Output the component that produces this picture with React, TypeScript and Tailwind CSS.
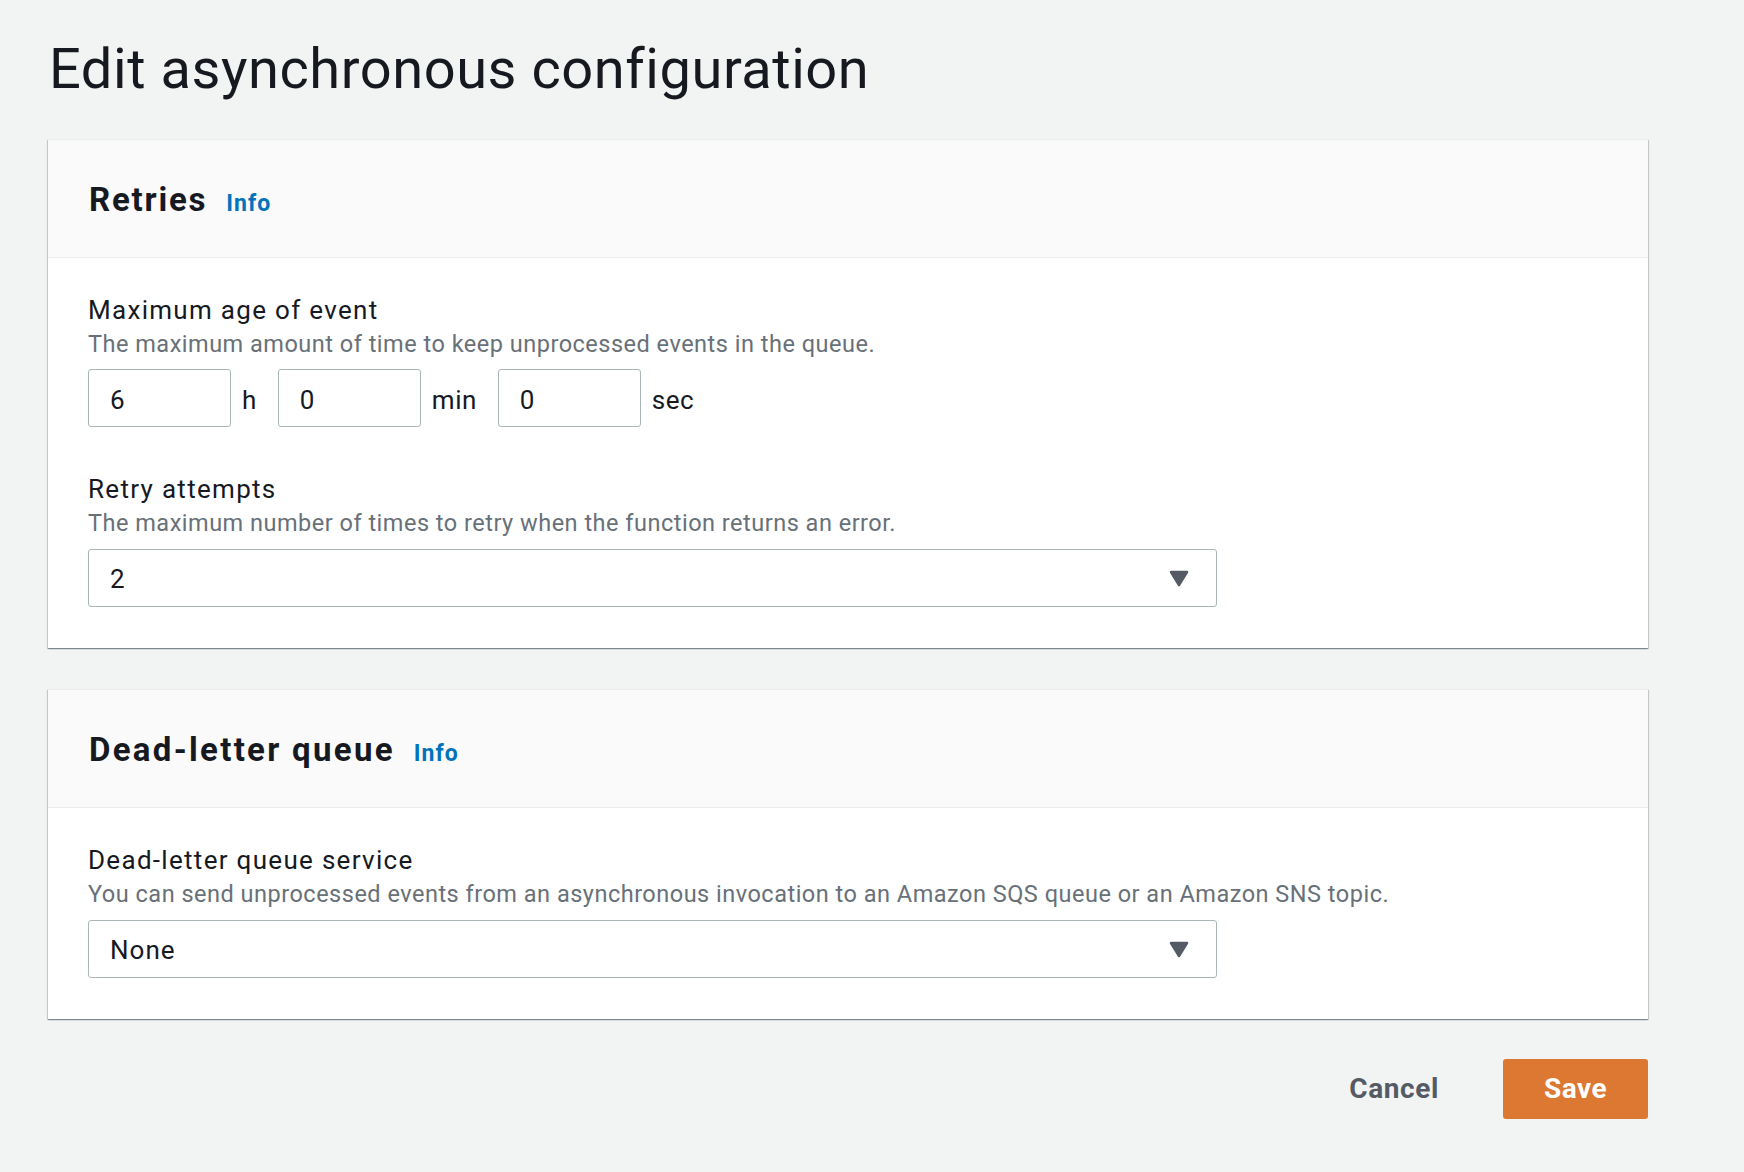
function Caret() {
  return (
    <svg width="20" height="17" viewBox="0 0 20 17" className="shrink-0">
      <path d="M2 2 H18 L10 15 Z" fill="#545b64" stroke="#545b64" strokeWidth="2.5" strokeLinejoin="round" />
    </svg>
  );
}

function CardHeader({ title, wide }: { title: string; wide?: boolean }) {
  return (
    <div className="h-[118px] bg-[#fafafa] border-b border-[#eaeded] px-[41px] flex items-center">
      <div className="flex items-baseline gap-[19px] pt-[2px]">
        <h2 className={`text-[33px] leading-none font-bold text-[#16191f] ${wide ? "tracking-[2.3px]" : "tracking-[1.8px]"}`}>
          {title}
        </h2>
        <a className="text-[23px] leading-none font-bold tracking-[1px] text-[#0073bb]">Info</a>
      </div>
    </div>
  );
}

function FieldLabel({ label, desc }: { label: string; desc: string }) {
  return (
    <div>
      <div className="text-[26px] leading-[36px] tracking-[1.3px] text-[#16191f]">{label}</div>
      <div className="text-[23.5px] leading-[33px] tracking-[0.5px] text-[#687078]">{desc}</div>
    </div>
  );
}

function Select({ value }: { value: string }) {
  return (
    <div className="mt-[9px] w-[1129px] h-[58px] border border-[#aab7b8] rounded-[3px] bg-white flex items-center justify-between pl-[21px] pr-[27px]">
      <span className="pt-[3px] text-[26px] tracking-[1px] text-[#16191f]">{value}</span>
      <Caret />
    </div>
  );
}

function TimeBox({ value, unit }: { value: string; unit: string }) {
  return (
    <div className="flex items-center">
      <div className="w-[143px] h-[58px] border border-[#aab7b8] rounded-[3px] bg-white flex items-center pl-[21px]">
        <span className="pt-[4px] text-[26px] text-[#16191f]">{value}</span>
      </div>
      <span className="ml-[11px] pt-[4px] text-[26px] tracking-[0.5px] text-[#16191f]">{unit}</span>
    </div>
  );
}

const cardClass =
  "w-[1600px] bg-white border-t border-[#eaeded] shadow-[0_1px_1px_0_rgba(0,28,36,0.3),1px_1px_1px_0_rgba(0,28,36,0.15),-1px_1px_1px_0_rgba(0,28,36,0.15)]";

export default function App() {
  return (
    <div className="min-h-screen bg-[#f2f3f3] pl-[48px] pt-[37px] font-['Roboto',sans-serif]">
      <h1 className="pl-[1px] text-[56px] leading-[64px] font-normal tracking-[0.55px] text-[#16191f]">
        Edit asynchronous configuration
      </h1>

      <section className={`mt-[38px] ${cardClass}`}>
        <CardHeader title="Retries" />
        <div className="px-[40px] pt-[34px] pb-[41px]">
          <FieldLabel label="Maximum age of event" desc="The maximum amount of time to keep unprocessed events in the queue." />
          <div className="mt-[8px] flex items-center gap-[21px]">
            <TimeBox value="6" unit="h" />
            <TimeBox value="0" unit="min" />
            <TimeBox value="0" unit="sec" />
          </div>

          <div className="mt-[44px]">
            <FieldLabel label="Retry attempts" desc="The maximum number of times to retry when the function returns an error." />
            <Select value="2" />
          </div>
        </div>
      </section>

      <section className={`mt-[41px] ${cardClass}`}>
        <CardHeader title="Dead-letter queue" wide />
        <div className="px-[40px] pt-[34px] pb-[41px]">
          <FieldLabel
            label="Dead-letter queue service"
            desc="You can send unprocessed events from an asynchronous invocation to an Amazon SQS queue or an Amazon SNS topic."
          />
          <Select value="None" />
        </div>
      </section>

      <div className="w-[1600px] mt-[40px] flex justify-end items-center gap-[64px]">
        <button className="text-[28px] font-bold tracking-[0.6px] text-[#545b64]">Cancel</button>
        <button className="w-[145px] h-[60px] rounded-[3px] bg-[#dd7833] text-white text-[28px] font-bold tracking-[0.5px]">
          Save
        </button>
      </div>
    </div>
  );
}
